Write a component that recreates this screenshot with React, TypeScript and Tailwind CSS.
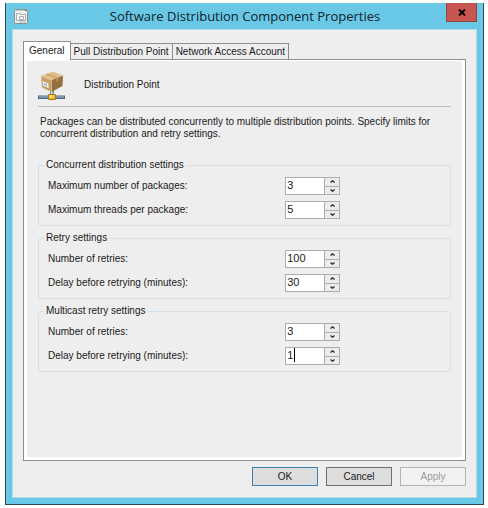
import { useState } from "react";

type Setting = { id: string; label: string; value: string; focused?: boolean };

const groups: { title: string; settings: Setting[] }[] = [
  {
    title: "Concurrent distribution settings",
    settings: [
      { id: "max-packages", label: "Maximum number of packages:", value: "3" },
      { id: "max-threads", label: "Maximum threads per package:", value: "5" },
    ],
  },
  {
    title: "Retry settings",
    settings: [
      { id: "retries", label: "Number of retries:", value: "100" },
      { id: "retry-delay", label: "Delay before retrying (minutes):", value: "30" },
    ],
  },
  {
    title: "Multicast retry settings",
    settings: [
      { id: "multicast-retries", label: "Number of retries:", value: "3" },
      { id: "multicast-delay", label: "Delay before retrying (minutes):", value: "1", focused: true },
    ],
  },
];

const tabs = ["General", "Pull Distribution Point", "Network Access Account"];

function WindowIcon() {
  return (
    <svg width="14" height="15" viewBox="0 0 14 15" aria-hidden="true">
      <rect x="0.5" y="0.5" width="13" height="14" rx="1" fill="#eeeeee" stroke="#8b8f92" />
      <path d="M1 1.500h12" stroke="#c9cbcd" />
      <path d="M11 1.500h1.500" stroke="#55595c" />
      <path d="M2.500 4.500h4v1h5v6h-9z" fill="#fafafa" stroke="#a9adb0" />
      <path d="M5.500 7.500h4v3h-4z" fill="#fff" stroke="#a9adb0" />
      <path d="M6 13h2" stroke="#47b9e6" />
      <path d="M9 13h3" stroke="#b0b4b6" />
    </svg>
  );
}

function PackageIcon() {
  return (
    <svg width="28" height="30" viewBox="0 0 28 30" aria-hidden="true">
      <path d="M12 19h4v6h-4z" fill="#7890a8" />
      <path d="M13 19h1.500v6H13z" fill="#d3dfe8" />
      <path d="M0 24.500h27v3.500H0z" fill="#4d6883" />
      <path d="M1 25.500h25v1H1z" fill="#b4c8d8" />
      <path d="M10.500 23.500h7v5h-7z" fill="#f2b92f" stroke="#a87718" />
      <path d="M11.500 24.500h3v2h-3z" fill="#ffe695" />
      <path d="M3 5 13.500 9v12L4 16.500z" fill="#c7a069" />
      <path d="M13.500 9 25 4.500 24.500 15l-11 6z" fill="#94703f" />
      <path d="M3 5 15 0.500l10 4L13.500 9z" fill="#dfc08b" />
      <path d="M7.500 3.500 10 2.500l10.500 4-2.500 1z" fill="#cba870" />
      <path d="M18 7.500 20.500 6.500v3.500L18 11z" fill="#b48e58" />
      <path d="m4.500 10 6 2.500v4.500l-5.500-2.500z" fill="#f3f1e9" />
      <path d="m6 12 3 1.200v1.800l-3-1.200z" fill="#8db9dc" />
      <path d="M3 5 13.500 9v12" fill="none" stroke="#e6cb98" strokeWidth="0.500" />
    </svg>
  );
}

function Spinner({ setting }: { setting: Setting }) {
  const [value, setValue] = useState(setting.value);
  const step = (by: number) => setValue(String(Math.max(0, Number(value) + by)));

  return (
    <div className="flex h-[18px] w-[55px] border border-[#abadb3] bg-white">
      <div className="flex min-w-0 flex-1 items-start">
        <input
          id={setting.id}
          value={value}
          size={1}
          onChange={(e) => setValue(e.target.value)}
          className={`h-[14px] pl-px text-[11px] leading-[14px] outline-none ${setting.focused ? "w-[9px] border-r border-black" : "w-full"}`}
        />
      </div>
      <div className="flex w-[15px] flex-col bg-[#abadb3] pl-px">
        <button type="button" aria-label="Increase" onClick={() => step(1)} className="flex flex-1 items-center justify-center bg-[#ececec]">
          <svg width="5" height="3" viewBox="0 0 5 3">
            <path d="M0.500 2.500 2.500 0.800l2 1.700" fill="none" stroke="#333" strokeWidth="1.400" />
          </svg>
        </button>
        <span className="h-px" />
        <button type="button" aria-label="Decrease" onClick={() => step(-1)} className="flex flex-1 items-center justify-center bg-[#ececec]">
          <svg width="5" height="3" viewBox="0 0 5 3">
            <path d="M0.500 0.500 2.500 2.200l2-1.700" fill="none" stroke="#333" strokeWidth="1.400" />
          </svg>
        </button>
      </div>
    </div>
  );
}

export default function App() {
  const [activeTab, setActiveTab] = useState("General");

  return (
    <div className="flex min-h-screen bg-white pt-[3px] pr-1 pb-[3px] pl-[5px] font-['Liberation_Sans',Arial,sans-serif] text-[10px] leading-3 text-[#1a1a1a]">
      <div className="flex flex-1 flex-col border-x border-b border-[#2b4552] bg-[#69c8e6] px-1.5 pb-1.5">
        <header className="flex h-[26px] items-start">
          <div className="pt-1.5 pl-0.5">
            <WindowIcon />
          </div>
          <h1 className="flex-1 pl-4 text-center font-['Open_Sans','Noto_Sans',sans-serif] text-[13px] leading-[26px] text-[#10242c]">
            Software Distribution Component Properties
          </h1>
          <button type="button" aria-label="Close" className="flex h-[19px] w-[31px] items-center justify-center border border-t-0 border-[#8c4744] bg-[#c75650]">
            <svg width="8" height="7" viewBox="0 0 8 7">
              <path d="M1 0.500 7 6.500M7 0.500 1 6.500" stroke="#000" strokeWidth="1.800" />
            </svg>
          </button>
        </header>

        <main className="flex flex-1 flex-col border border-[#b4dbe8] bg-[#eeeeee] px-2.5 pt-[11px] pb-[11px]">
          <div role="tablist" className="flex items-end">
            {tabs.map((tab) => (
              <button
                key={tab}
                type="button"
                role="tab"
                aria-selected={tab === activeTab}
                onClick={() => setActiveTab(tab)}
                className={`border border-b-0 border-[#8c8e94] whitespace-nowrap ${tab === activeTab ? "relative -mb-px h-[19px] bg-white px-[5px]" : "-ml-px h-4 bg-[#eeeeee] px-[3px]"}`}
              >
                {tab}
              </button>
            ))}
          </div>

          <section role="tabpanel" className="flex-1 border border-[#8c8e94] bg-white p-[3px] pt-px">
            <div className="h-full bg-[#eeeeee] px-[11px] pt-2.5">
              <div className="flex h-9 items-start border-b border-[#bdbdbd]">
                <PackageIcon />
                <h2 className="pt-2 pl-[18px]">Distribution Point</h2>
              </div>
              <p className="pt-[9px] pb-[19px] pl-0.5">
                Packages can be distributed concurrently to multiple distribution points. Specify limits for concurrent distribution and retry settings.
              </p>
              <div className="flex flex-col gap-1.5">
                {groups.map((group) => (
                  <fieldset key={group.title} className="rounded-[3px] border border-[#d5dfe5] pt-1.5 pb-1.5 pl-[9px]">
                    <legend className="-ml-1 px-0.5">{group.title}</legend>
                    <div className="flex flex-col gap-1.5">
                      {group.settings.map((setting) => (
                        <div key={setting.id} className="flex items-center">
                          <label htmlFor={setting.id} className="w-[59%]">
                            {setting.label}
                          </label>
                          <Spinner setting={setting} />
                        </div>
                      ))}
                    </div>
                  </fieldset>
                ))}
              </div>
            </div>
          </section>

          <footer className="flex justify-end gap-2 pt-1.5">
            <button type="button" className="h-[19px] w-[66px] border border-[#3c7fb1] bg-[#dddddd]">
              OK
            </button>
            <button type="button" className="h-[19px] w-[66px] border border-[#707070] bg-[#dddddd]">
              Cancel
            </button>
            <button type="button" disabled className="h-[19px] w-[66px] border border-[#b5b5b5] bg-[#f2f2f2] text-[#9a9a9a]">
              Apply
            </button>
          </footer>
        </main>
      </div>
    </div>
  );
}
